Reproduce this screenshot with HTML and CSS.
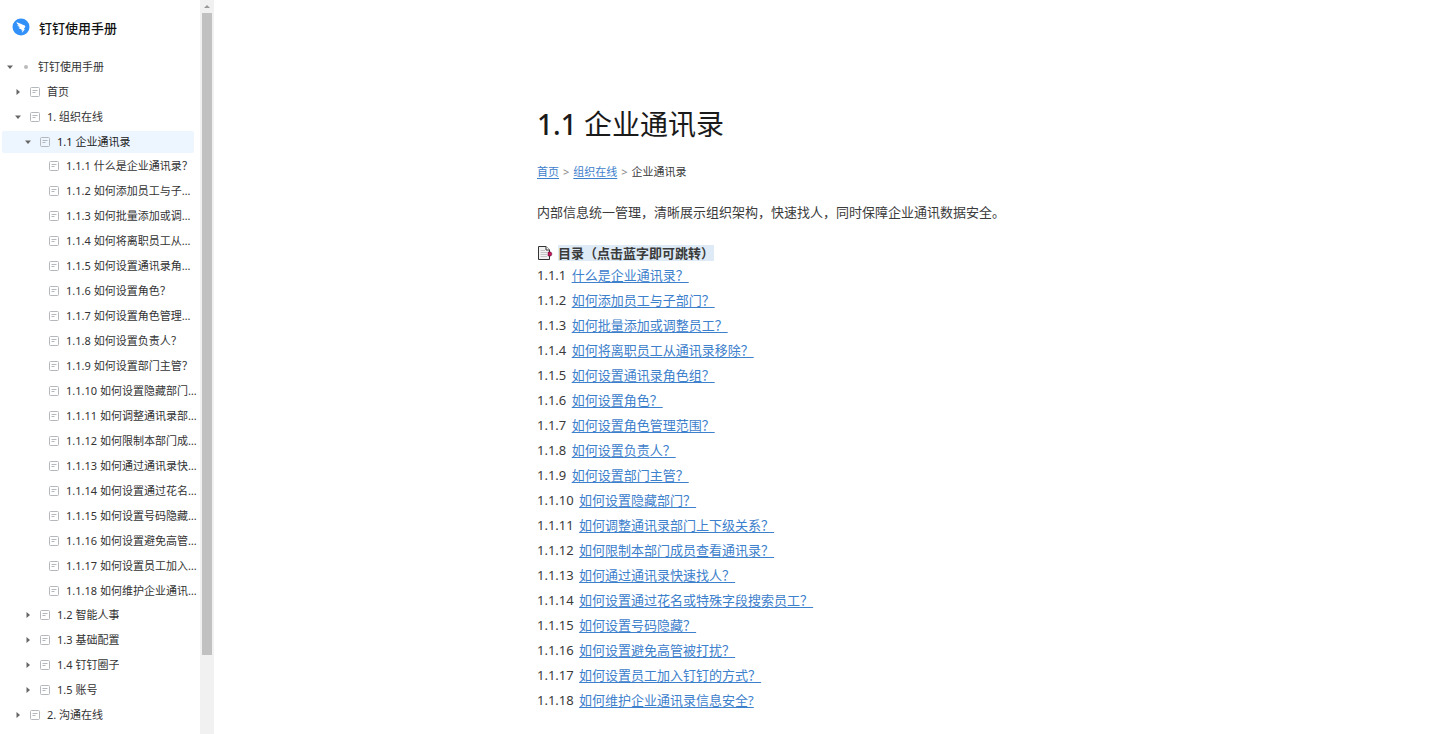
FILE: index.html
```html
<!DOCTYPE html>
<html lang="zh-CN">
<head>
<meta charset="utf-8">
<title>钉钉使用手册</title>
<link rel="stylesheet" href="styles.css">
</head>
<body>
<svg class="sprite" aria-hidden="true">
  <symbol id="doc" viewBox="0 0 10 10"><rect x=".5" y=".5" width="9" height="9" rx="1" fill="none" stroke="#b4b7bc"/><path d="M2.500 3.500H7.500M2.500 5.500H5.500" stroke="#b4b7bc" fill="none"/></symbol>
  <symbol id="down" viewBox="0 0 8 8"><path d="M1 2.500H7L4 6Z" fill="#666"/></symbol>
  <symbol id="right" viewBox="0 0 8 8"><path d="M2.500 1V7L6 4Z" fill="#666"/></symbol>
</svg>
<aside class="sidebar">
  <div class="panel">
    <header class="brand">
      <svg class="logo" viewBox="0 0 18 18" aria-hidden="true"><circle cx="9" cy="9" r="8.500" fill="#3291f8"/><path d="M4.500 4C7 5.500 10.500 6.300 12.700 7.500C13.600 8 13.300 8.800 12.900 9.600L11.700 11.300H13L9.800 15L10.500 12.300H9.100L9.500 11.100C7.700 11.200 6.900 10.300 6.500 9.500L8.300 9.400C6.500 8.800 5.700 8 5.400 7.100L7.600 7.400C5.500 6.500 4.600 5.500 4.500 4Z" fill="#fff"/></svg>
      <span>钉钉使用手册</span>
    </header>
    <nav aria-label="目录">
      <ul class="tree">
        <li><a class="row level-0" href="#"><svg class="caret"><use href="#down"/></svg><span class="dot"></span><span class="label">钉钉使用手册</span></a></li>
        <li><a class="row level-1" href="#"><svg class="caret"><use href="#right"/></svg><svg class="doc"><use href="#doc"/></svg><span class="label">首页</span></a></li>
        <li><a class="row level-1" href="#"><svg class="caret"><use href="#down"/></svg><svg class="doc"><use href="#doc"/></svg><span class="label">1. 组织在线</span></a></li>
        <li><a class="row level-2 selected" href="#" aria-current="page"><svg class="caret"><use href="#down"/></svg><svg class="doc"><use href="#doc"/></svg><span class="label">1.1 企业通讯录</span></a>
          <ul class="tree children">
            <li><a class="row level-3" href="#"><svg class="doc"><use href="#doc"/></svg><span class="label">1.1.1 什么是企业通讯录？</span></a></li>
            <li><a class="row level-3" href="#"><svg class="doc"><use href="#doc"/></svg><span class="label">1.1.2 如何添加员工与子部门？</span></a></li>
            <li><a class="row level-3" href="#"><svg class="doc"><use href="#doc"/></svg><span class="label">1.1.3 如何批量添加或调整员工？</span></a></li>
            <li><a class="row level-3" href="#"><svg class="doc"><use href="#doc"/></svg><span class="label">1.1.4 如何将离职员工从通讯录移除？</span></a></li>
            <li><a class="row level-3" href="#"><svg class="doc"><use href="#doc"/></svg><span class="label">1.1.5 如何设置通讯录角色组？</span></a></li>
            <li><a class="row level-3" href="#"><svg class="doc"><use href="#doc"/></svg><span class="label">1.1.6 如何设置角色？</span></a></li>
            <li><a class="row level-3" href="#"><svg class="doc"><use href="#doc"/></svg><span class="label">1.1.7 如何设置角色管理范围？</span></a></li>
            <li><a class="row level-3" href="#"><svg class="doc"><use href="#doc"/></svg><span class="label">1.1.8 如何设置负责人？</span></a></li>
            <li><a class="row level-3" href="#"><svg class="doc"><use href="#doc"/></svg><span class="label">1.1.9 如何设置部门主管？</span></a></li>
            <li><a class="row level-3" href="#"><svg class="doc"><use href="#doc"/></svg><span class="label">1.1.10 如何设置隐藏部门？</span></a></li>
            <li><a class="row level-3" href="#"><svg class="doc"><use href="#doc"/></svg><span class="label">1.1.11 如何调整通讯录部门上下级关系？</span></a></li>
            <li><a class="row level-3" href="#"><svg class="doc"><use href="#doc"/></svg><span class="label">1.1.12 如何限制本部门成员查看通讯录？</span></a></li>
            <li><a class="row level-3" href="#"><svg class="doc"><use href="#doc"/></svg><span class="label">1.1.13 如何通过通讯录快速找人？</span></a></li>
            <li><a class="row level-3" href="#"><svg class="doc"><use href="#doc"/></svg><span class="label">1.1.14 如何设置通过花名或特殊字段搜索员工？</span></a></li>
            <li><a class="row level-3" href="#"><svg class="doc"><use href="#doc"/></svg><span class="label">1.1.15 如何设置号码隐藏？</span></a></li>
            <li><a class="row level-3" href="#"><svg class="doc"><use href="#doc"/></svg><span class="label">1.1.16 如何设置避免高管被打扰？</span></a></li>
            <li><a class="row level-3" href="#"><svg class="doc"><use href="#doc"/></svg><span class="label">1.1.17 如何设置员工加入钉钉的方式？</span></a></li>
            <li><a class="row level-3" href="#"><svg class="doc"><use href="#doc"/></svg><span class="label">1.1.18 如何维护企业通讯录信息安全?</span></a></li>
          </ul>
        </li>
        <li><a class="row level-2" href="#"><svg class="caret"><use href="#right"/></svg><svg class="doc"><use href="#doc"/></svg><span class="label">1.2 智能人事</span></a></li>
        <li><a class="row level-2" href="#"><svg class="caret"><use href="#right"/></svg><svg class="doc"><use href="#doc"/></svg><span class="label">1.3 基础配置</span></a></li>
        <li><a class="row level-2" href="#"><svg class="caret"><use href="#right"/></svg><svg class="doc"><use href="#doc"/></svg><span class="label">1.4 钉钉圈子</span></a></li>
        <li><a class="row level-2" href="#"><svg class="caret"><use href="#right"/></svg><svg class="doc"><use href="#doc"/></svg><span class="label">1.5 账号</span></a></li>
        <li><a class="row level-1" href="#"><svg class="caret"><use href="#right"/></svg><svg class="doc"><use href="#doc"/></svg><span class="label">2. 沟通在线</span></a></li>
      </ul>
    </nav>
  </div>
  <div class="scrollbar" aria-hidden="true">
    <svg class="scroll-arrow" viewBox="0 0 14 13"><path d="M4 8H10L7 5Z" fill="#999"/></svg>
    <div class="track"><div class="thumb"></div></div>
  </div>
</aside>
<main class="page">
  <article class="article">
    <h1><span class="title-number">1.1</span> 企业通讯录</h1>
    <nav class="crumbs" aria-label="面包屑"><a href="#">首页</a><span class="sep">&gt;</span><a href="#">组织在线</a><span class="sep">&gt;</span><span>企业通讯录</span></nav>
    <p class="intro">内部信息统一管理，清晰展示组织架构，快速找人，同时保障企业通讯数据安全。</p>
    <h2><svg class="toc-icon" viewBox="0 0 16 16" aria-hidden="true"><path d="M1.500 1.500H9L12.500 5V14.500H1.500Z" fill="#f2f2f2" stroke="#333"/><path d="M3.500 5.500H8M3.500 7.500H10M3.500 9.500H10M3.500 11.500H10" stroke="#c4c4c4"/><path d="M9 1.500V5H12.500" fill="#fff" stroke="#333"/><path d="M11 7H14L15 9L14 11H11Z" fill="#c2185b" stroke="#5a1030" stroke-width=".5"/></svg><span class="mark">目录（点击蓝字即可跳转）</span></h2>
    <ul class="toc">
      <li><span class="num">1.1.1</span> <a href="#">什么是企业通讯录？</a></li>
      <li><span class="num">1.1.2</span> <a href="#">如何添加员工与子部门？</a></li>
      <li><span class="num">1.1.3</span> <a href="#">如何批量添加或调整员工？</a></li>
      <li><span class="num">1.1.4</span> <a href="#">如何将离职员工从通讯录移除？</a></li>
      <li><span class="num">1.1.5</span> <a href="#">如何设置通讯录角色组？</a></li>
      <li><span class="num">1.1.6</span> <a href="#">如何设置角色？</a></li>
      <li><span class="num">1.1.7</span> <a href="#">如何设置角色管理范围？</a></li>
      <li><span class="num">1.1.8</span> <a href="#">如何设置负责人？</a></li>
      <li><span class="num">1.1.9</span> <a href="#">如何设置部门主管？</a></li>
      <li><span class="num">1.1.10</span> <a href="#">如何设置隐藏部门？</a></li>
      <li><span class="num">1.1.11</span> <a href="#">如何调整通讯录部门上下级关系？</a></li>
      <li><span class="num">1.1.12</span> <a href="#">如何限制本部门成员查看通讯录？</a></li>
      <li><span class="num">1.1.13</span> <a href="#">如何通过通讯录快速找人？</a></li>
      <li><span class="num">1.1.14</span> <a href="#">如何设置通过花名或特殊字段搜索员工？</a></li>
      <li><span class="num">1.1.15</span> <a href="#">如何设置号码隐藏？</a></li>
      <li><span class="num">1.1.16</span> <a href="#">如何设置避免高管被打扰？</a></li>
      <li><span class="num">1.1.17</span> <a href="#">如何设置员工加入钉钉的方式？</a></li>
      <li><span class="num">1.1.18</span> <a href="#">如何维护企业通讯录信息安全?</a></li>
    </ul>
  </article>
</main>
</body>
</html>
```
FILE: styles.css
```css
* { box-sizing: border-box; }
body {
  margin: 0;
  display: flex;
  height: 100vh;
  overflow: hidden;
  background: #fff;
  color: #3a3a3a;
  font-family: "Noto Sans", "Noto Sans CJK SC", sans-serif;
}
ul { list-style: none; margin: 0; padding: 0; }
.sprite { position: absolute; width: 0; height: 0; }

.sidebar { display: flex; flex: none; width: 214px; overflow: hidden; }
.panel { flex: 1; min-width: 0; padding: 0 2px; overflow: hidden; }
.brand {
  display: flex;
  align-items: center;
  gap: 9px;
  height: 54px;
  margin-bottom: 2px;
  padding-left: 10px;
  color: #111;
  font-size: 13px;
  font-weight: 500;
}
.logo { width: 18px; height: 18px; }
.tree { display: flex; flex-direction: column; gap: 3px; }
.children { padding-top: 2px; margin-bottom: -1px; }
.row {
  display: flex;
  align-items: center;
  height: 22px;
  border-radius: 2px;
  color: #333;
  font-size: 11px;
  line-height: 22px;
  text-decoration: none;
}
.level-0 { padding-left: 4px; }
.level-1 { padding-left: 12px; }
.level-2 { padding-left: 22px; }
.level-3 { padding-left: 47px; }
.selected { margin-right: 4px; background: #edf6ff; color: #222; }
.caret { flex: none; width: 8px; height: 8px; margin-right: 8px; }
.doc { flex: none; width: 10px; height: 10px; margin-right: 7px; }
.dot { width: 4px; height: 4px; margin: 0 10px 0 2px; border-radius: 50%; background: #bbb; }
.label { min-width: 0; overflow: hidden; white-space: nowrap; text-overflow: ellipsis; }

.scrollbar { display: flex; flex-direction: column; flex: none; width: 14px; background: #f1f1f1; }
.scroll-arrow { width: 14px; height: 13px; }
.track { flex: 1; padding: 0 2px; }
.thumb { height: 89%; background: #c1c1c1; }

.page { flex: 1; min-width: 0; overflow: hidden; }
.article { max-width: 580px; margin: 0 auto; padding-top: 103px; }
h1 { margin: 0; color: #1a1a1a; font-size: 28px; font-weight: 400; line-height: 42px; }
.title-number { font-weight: 500; }
.crumbs { display: flex; gap: 4px; margin-top: 17px; font-size: 11px; line-height: 20px; }
.crumbs a, .toc a { color: #3d80cc; text-underline-offset: 2px; }
.sep { color: #888; }
.intro { margin: 19px 0 0; font-size: 13px; line-height: 22px; }
h2 { display: flex; align-items: center; gap: 5px; margin: 22px 0 0; font-size: 13px; line-height: 22px; }
.toc-icon { width: 16px; height: 16px; }
.mark { background: #deebf7; line-height: 16px; }
.toc { margin-top: 2px; font-size: 13px; line-height: 25px; }
.num { margin-right: 2px; }
```
